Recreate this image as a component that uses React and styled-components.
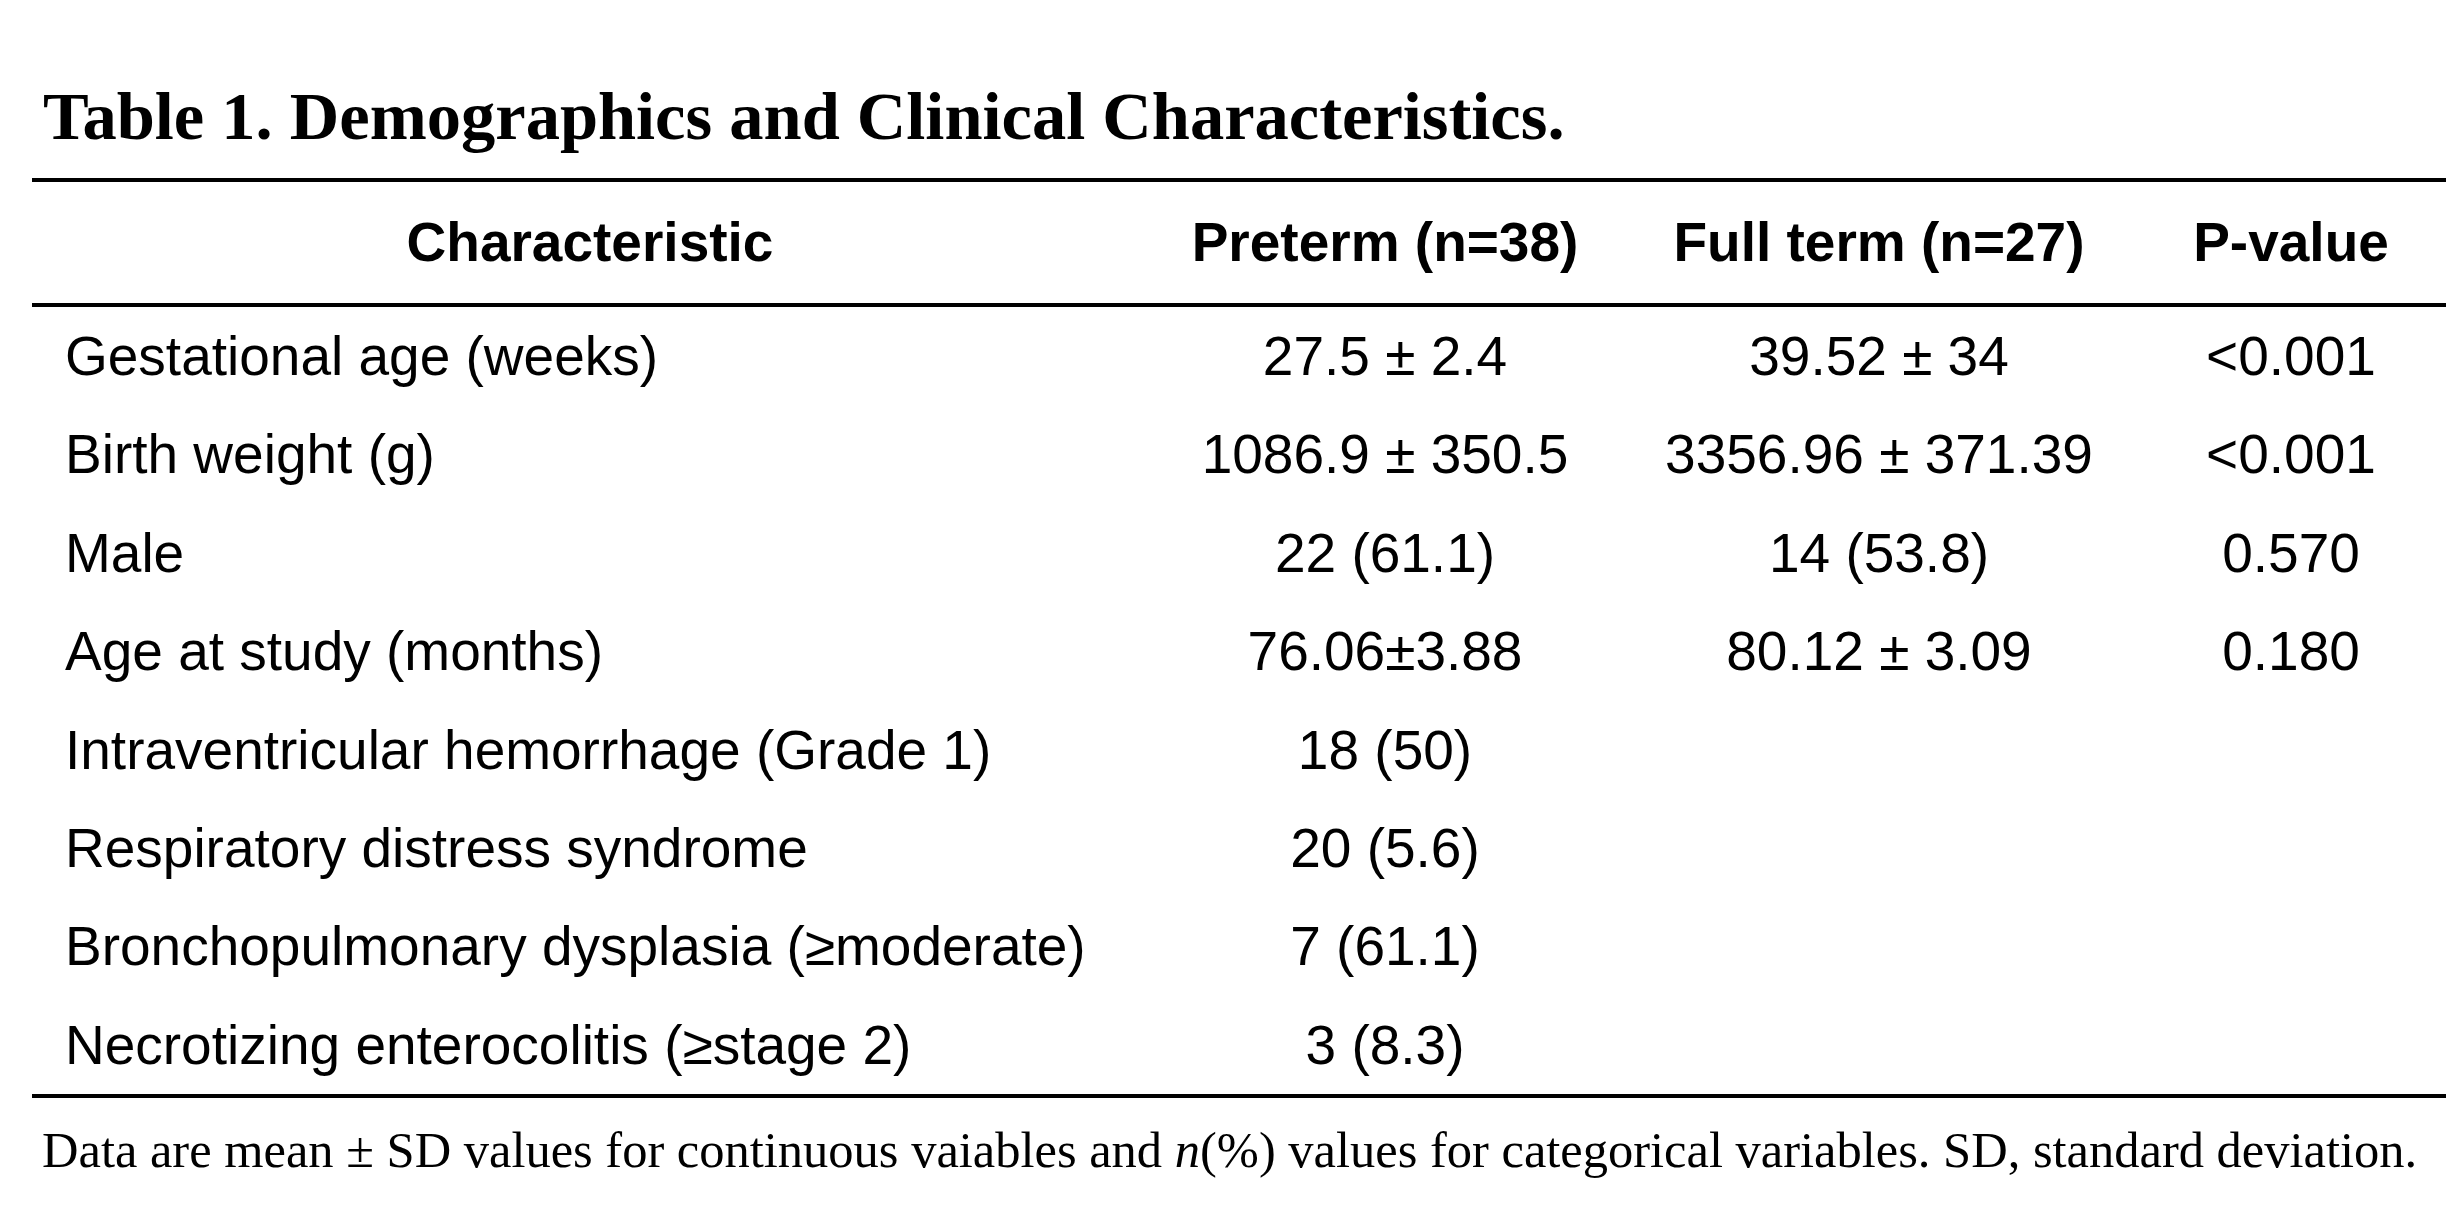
import React from "react";
import styled, { createGlobalStyle } from "styled-components";

const GlobalStyle = createGlobalStyle`
  html, body {
    margin: 0;
    padding: 0;
    background: #ffffff;
  }
  body {
    width: 2455px;
    height: 1210px;
    overflow: hidden;
    color: #000;
  }
`;

const Page = styled.div`
  box-sizing: border-box;
  width: 2455px;
  padding: 82px 9px 0 32px;
`;

const Title = styled.h1`
  margin: 0 0 27px 11px;
  font-family: "Liberation Serif", "Times New Roman", serif;
  font-weight: bold;
  font-size: 68.5px;
  line-height: 69px;
  height: 69px;
  white-space: nowrap;
`;

const Table = styled.table`
  width: 2414px;
  border-collapse: collapse;
  table-layout: fixed;
  border-top: 4px solid #000;
  border-bottom: 4px solid #000;
  font-family: "Liberation Sans", Arial, sans-serif;
  font-size: 55px;
`;

const HeadRow = styled.tr`
  height: 121px;
  border-bottom: 4px solid #000;
`;

const HeadCell = styled.th`
  padding: 0;
  font-weight: bold;
  text-align: center;
  line-height: 121px;
  white-space: nowrap;
`;

const Row = styled.tr`
  height: 98.4px;
`;

const Cell = styled.td`
  padding: ${(p) => (p.$label ? "0 0 0 33px" : "0")};
  text-align: ${(p) => (p.$label ? "left" : "center")};
  line-height: 98.4px;
  white-space: nowrap;
`;

const Note = styled.p`
  margin: 27px 0 0 10px;
  font-family: "Liberation Serif", "Times New Roman", serif;
  font-size: 50.5px;
  line-height: 50px;
  white-space: nowrap;
`;

const rows = [
  ["Gestational age (weeks)", "27.5 ± 2.4", "39.52 ± 34", "<0.001"],
  ["Birth weight (g)", "1086.9 ± 350.5", "3356.96 ± 371.39", "<0.001"],
  ["Male", "22 (61.1)", "14 (53.8)", "0.570"],
  ["Age at study (months)", "76.06±3.88", "80.12 ± 3.09", "0.180"],
  ["Intraventricular hemorrhage (Grade 1)", "18 (50)", "", ""],
  ["Respiratory distress syndrome", "20 (5.6)", "", ""],
  ["Bronchopulmonary dysplasia (≥moderate)", "7 (61.1)", "", ""],
  ["Necrotizing enterocolitis (≥stage 2)", "3 (8.3)", "", ""],
];

export default function App() {
  return (
    <Page>
      <GlobalStyle />
      <Title>Table 1. Demographics and Clinical Characteristics.</Title>
      <Table>
        <colgroup>
          <col style={{ width: 1116 }} />
          <col style={{ width: 474 }} />
          <col style={{ width: 514 }} />
          <col style={{ width: 310 }} />
        </colgroup>
        <thead>
          <HeadRow>
            <HeadCell>Characteristic</HeadCell>
            <HeadCell>Preterm (n=38)</HeadCell>
            <HeadCell>Full term (n=27)</HeadCell>
            <HeadCell>P-value</HeadCell>
          </HeadRow>
        </thead>
        <tbody>
          {rows.map((r) => (
            <Row key={r[0]}>
              <Cell $label>{r[0]}</Cell>
              <Cell>{r[1]}</Cell>
              <Cell>{r[2]}</Cell>
              <Cell>{r[3]}</Cell>
            </Row>
          ))}
        </tbody>
      </Table>
      <Note>
        Data are mean ± SD values for continuous vaiables and <i>n</i>(%) values for
        categorical variables. SD, standard deviation.
      </Note>
    </Page>
  );
}
